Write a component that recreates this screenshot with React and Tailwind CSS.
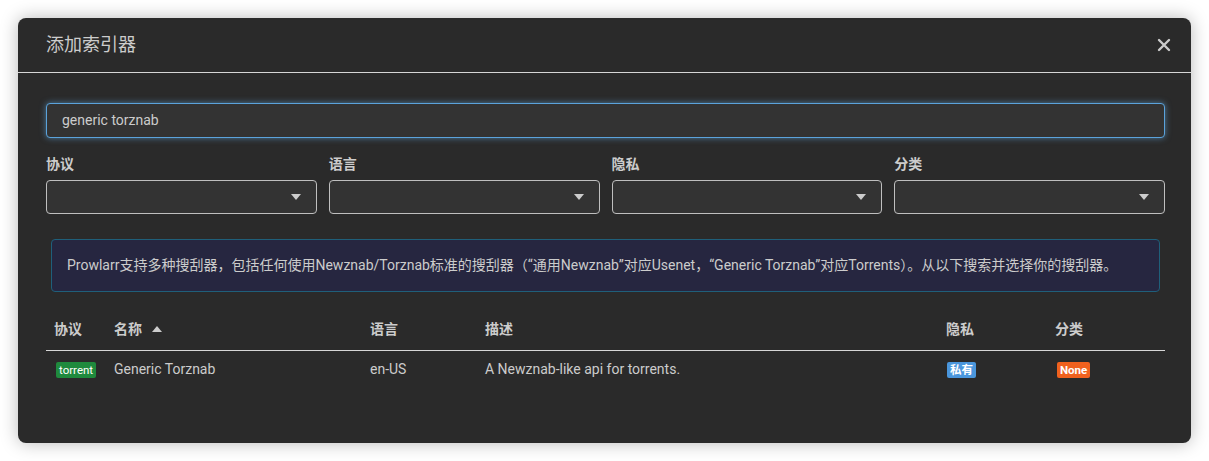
import React from 'react'

const font = { fontFamily: 'Roboto, "Noto Sans CJK SC", sans-serif' }

const filters = ['协议', '语言', '隐私', '分类']

const columns = [
  { label: '协议', w: 'w-[60px]' },
  { label: '名称', w: 'w-[256px]', sorted: true },
  { label: '语言', w: 'w-[115px]' },
  { label: '描述', w: 'w-[461px]' },
  { label: '隐私', w: 'w-[109px]' },
  { label: '分类', w: 'flex-1' },
]

const Caret = ({ up }) => (
  <svg width="10" height="6" viewBox="0 0 10 6" className="inline-block">
    {up ? <path d="M5 0 L10 6 L0 6 Z" fill="#ccc" /> : <path d="M0 0 L10 0 L5 6 Z" fill="#ccc" />}
  </svg>
)

const SelectBox = ({ label }) => (
  <div className="flex-1">
    <div className="mb-[8px] h-[16px] text-[14px] font-bold leading-[16px] text-[#ccc]">{label}</div>
    <div className="flex h-[34px] items-center justify-end rounded-[4px] border border-[#bfbfbf] bg-[#333] pr-[15px]">
      <Caret />
    </div>
  </div>
)

export default function App() {
  return (
    <div className="h-[461px] bg-white p-[18px]" style={font}>
      <div className="h-[425px] overflow-hidden rounded-[8px] bg-[#2a2a2a] shadow-[0_0_18px_rgba(0,0,0,0.28)]">
        <div className="flex h-[55px] items-center justify-between border-b border-[#d6d6d6] pl-[28px] pr-[20px]">
          <h1 className="text-[18px] leading-none text-[#ccc]">添加索引器</h1>
          <svg width="14" height="14" viewBox="0 0 14 14">
            <path d="M2 2 L12 12 M12 2 L2 12" stroke="#ccc" strokeWidth="2.4" strokeLinecap="round" />
          </svg>
        </div>

        <div className="pl-[28px] pr-[26px] pt-[30px]">
          <div className="flex h-[35px] items-center rounded-[4px] border border-[#5ba3dc] bg-[#333] pl-[15px] text-[14px] text-[#ccc] shadow-[0_0_6px_rgba(102,175,233,0.6)]">
            generic torznab
          </div>

          <div className="mt-[18px] flex gap-[12px]">
            {filters.map((f) => (
              <SelectBox key={f} label={f} />
            ))}
          </div>

          <div className="mx-[5px] mt-[25px] flex h-[53px] items-center rounded-[4px] border border-[#1f5f7a] bg-[#262640] pl-[15px] text-[14px] text-[#ccc]">
            Prowlarr支持多种搜刮器，包括任何使用Newznab/Torznab标准的搜刮器（“通用Newznab”对应Usenet，“Generic Torznab”对应Torrents）。从以下搜索并选择你的搜刮器。
          </div>

          <div className="mt-[29px]">
            <div className="flex h-[30px] items-start border-b border-[#d6d6d6] text-[14px] font-bold text-[#ccc]">
              {columns.map((c) => (
                <div key={c.label} className={c.w + ' flex items-center gap-[10px] pl-[8px] leading-[16px]'}>
                  {c.label}
                  {c.sorted ? <Caret up /> : null}
                </div>
              ))}
            </div>
            <div className="flex h-[37px] items-center text-[14px] text-[#ccc]">
              <div className="w-[60px] pl-[10px]">
                <span className="rounded-[2px] bg-[#1f8a3d] px-[3px] py-[1px] text-[11.5px] text-white">torrent</span>
              </div>
              <div className="w-[256px] pl-[8px]">Generic Torznab</div>
              <div className="w-[115px] pl-[8px]">en-US</div>
              <div className="w-[461px] pl-[8px]">A Newznab-like api for torrents.</div>
              <div className="w-[109px] pl-[9px]">
                <span className="rounded-[2px] bg-[#4a96dc] px-[3px] py-[1px] text-[11.5px] font-bold text-white">私有</span>
              </div>
              <div className="flex-1 pl-[10px]">
                <span className="rounded-[2px] bg-[#f0611e] px-[3px] py-[1px] text-[11.5px] font-bold text-white">None</span>
              </div>
            </div>
          </div>
        </div>
      </div>
    </div>
  )
}
